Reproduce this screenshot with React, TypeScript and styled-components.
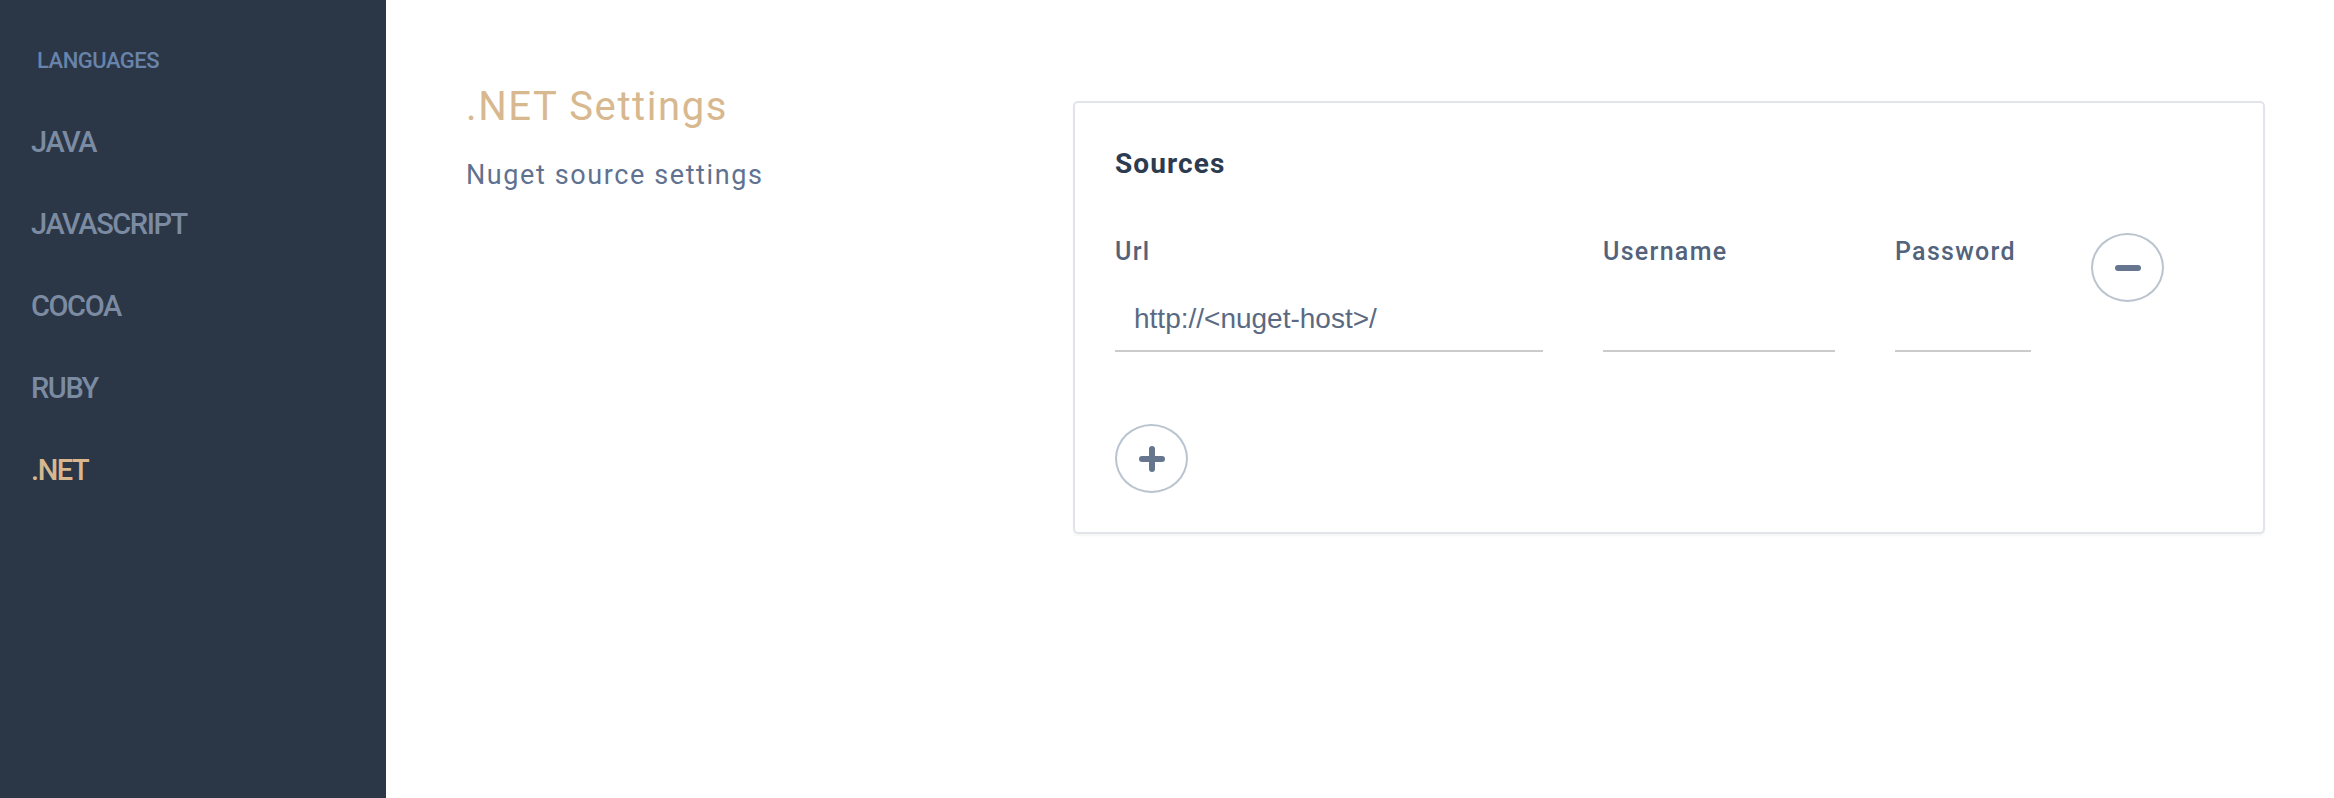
import styled, { createGlobalStyle } from 'styled-components';

const GlobalStyle = createGlobalStyle`
    html, body {
        margin: 0;
        padding: 0;
        background: #ffffff;
    }
    body {
        font-family: Roboto, "Noto Sans", sans-serif;
    }
`

const Page = styled.div`
    display: flex;
    width: 2334px;
    height: 798px;
`

const Sidebar = styled.nav`
    width: 386px;
    flex-shrink: 0;
    background-color: #2b3646;
    padding: 46px 0 0 31px;
    box-sizing: border-box;
`

const SectionTitle = styled.div`
    font-size: 22px;
    font-weight: 500;
    letter-spacing: -0.5px;
    color: #6884ab;
    padding-left: 6px;
    line-height: 30px;
    margin-bottom: 48px;
`

const Menu = styled.ul`
    list-style: none;
    margin: 0;
    padding: 0;
    display: flex;
    flex-direction: column;
    gap: 46px;
`

const MenuItem = styled.li<{ $active?: boolean }>`
    font-size: 29px;
    font-weight: 500;
    line-height: 36px;
    letter-spacing: -1.4px;
    color: ${p => (p.$active ? '#d8b78e' : '#7b8ba2')};
`

const Main = styled.main`
    flex: 1;
    display: flex;
    padding: 83px 69px 0 80px;
    align-items: flex-start;
`

const Intro = styled.div`
    width: 607px;
    flex-shrink: 0;
`

const Heading = styled.h1`
    margin: 0;
    font-size: 40px;
    font-weight: 400;
    line-height: 48px;
    letter-spacing: 1.6px;
    color: #d8b88f;
`

const Subtitle = styled.p`
    margin: 27px 0 0;
    font-size: 27px;
    line-height: 34px;
    letter-spacing: 1.6px;
    color: #5f7290;
`

const Card = styled.section`
    flex: 1;
    margin-top: 18px;
    height: 433px;
    box-sizing: border-box;
    border: 2px solid #e1e4e9;
    border-radius: 5px;
    box-shadow: 0 2px 2px rgba(0, 0, 0, 0.04);
    padding: 44px 40px 0 40px;
`

const CardTitle = styled.h2`
    margin: 0 0 55px;
    font-size: 28px;
    font-weight: 700;
    line-height: 34px;
    letter-spacing: 1.1px;
    color: #2d3b50;
`

const Row = styled.div`
    display: grid;
    grid-template-columns: 428px 232px 136px 73px;
    column-gap: 60px;
    align-items: start;
`

const Field = styled.div`
    display: flex;
    flex-direction: column;
`

const Label = styled.label`
    font-size: 25px;
    font-weight: 500;
    line-height: 31px;
    letter-spacing: 1.3px;
    color: #53637c;
    margin-bottom: 35px;
`

const Input = styled.input`
    height: 50px;
    box-sizing: border-box;
    border: none;
    border-bottom: 2px solid #cbcbcb;
    padding: 0 19px 15px;
    font-family: "Liberation Sans", Arial, sans-serif;
    font-size: 28px;
    color: #5a6a82;
    outline: none;
    background: transparent;
    width: 100%;
`

const RoundButton = styled.button<{ $offset?: number }>`
    width: 73px;
    height: 69px;
    border-radius: 50%;
    border: 2px solid #bac4cf;
    background: #ffffff;
    display: flex;
    align-items: center;
    justify-content: center;
    padding: 0;
    margin-top: ${p => p.$offset ?? 0}px;
    cursor: pointer;
`

const AddRow = styled.div`
    margin-top: 72px;
`

const Glyph = ({ plus }: { plus?: boolean }) => (
    <svg width="28" height="28" viewBox="0 0 28 28">
        <line x1="4" y1="14" x2="24" y2="14" stroke="#66768f" strokeWidth="6" strokeLinecap="round" />
        {plus && <line x1="14" y1="4" x2="14" y2="24" stroke="#66768f" strokeWidth="6" strokeLinecap="round" />}
    </svg>
)

const languages = ['JAVA', 'JAVASCRIPT', 'COCOA', 'RUBY', '.NET']

function App() {
    return (
        <Page>
            <GlobalStyle />
            <Sidebar>
                <SectionTitle>LANGUAGES</SectionTitle>
                <Menu>
                    {languages.map(l => (
                        <MenuItem key={l} $active={l === '.NET'}>{l}</MenuItem>
                    ))}
                </Menu>
            </Sidebar>
            <Main>
                <Intro>
                    <Heading>.NET Settings</Heading>
                    <Subtitle>Nuget source settings</Subtitle>
                </Intro>
                <Card>
                    <CardTitle>Sources</CardTitle>
                    <Row>
                        <Field>
                            <Label>Url</Label>
                            <Input defaultValue="http://<nuget-host>/" />
                        </Field>
                        <Field>
                            <Label>Username</Label>
                            <Input />
                        </Field>
                        <Field>
                            <Label>Password</Label>
                            <Input type="password" />
                        </Field>
                        <RoundButton $offset={-3}><Glyph /></RoundButton>
                    </Row>
                    <AddRow>
                        <RoundButton><Glyph plus /></RoundButton>
                    </AddRow>
                </Card>
            </Main>
        </Page>
    )
}

export default App
